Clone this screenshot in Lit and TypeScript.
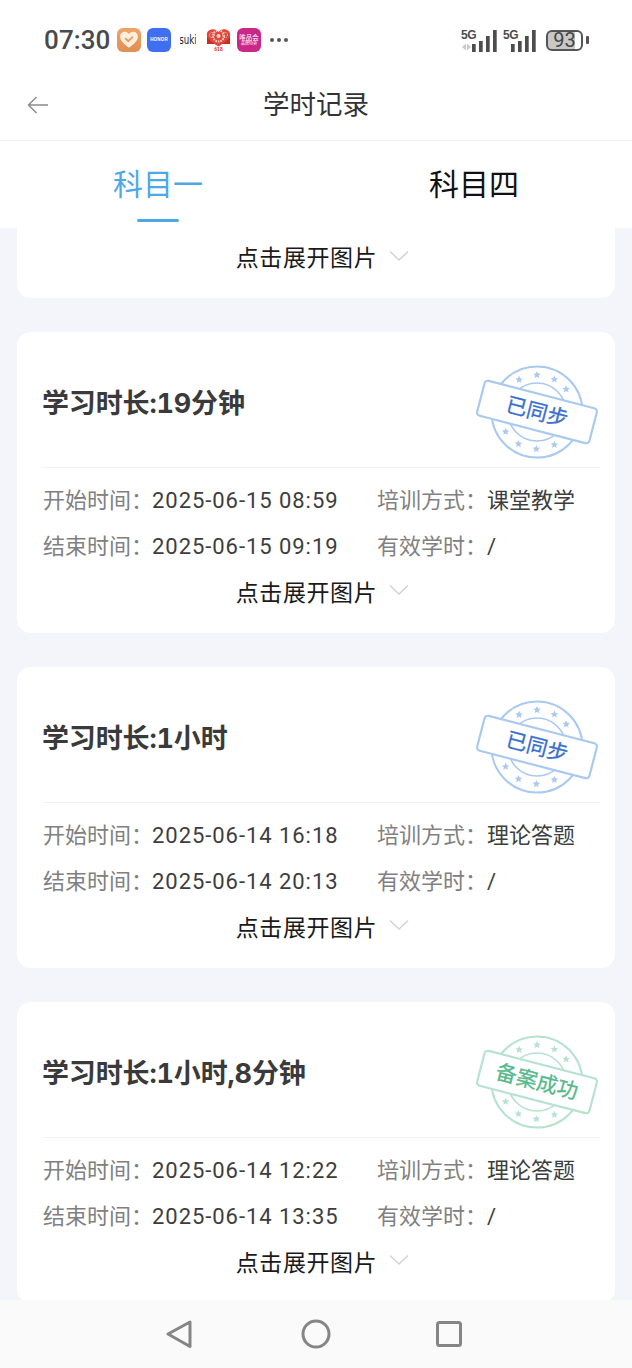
import { LitElement, html, css, svg } from "lit";
import { customElement } from "lit/decorators.js";

function stars(cx: number, cy: number, color: string) {
  const angles = [-119, -90, -62, -38, 148, 120, 91, 62];
  return angles.map((deg) => {
    const a = (deg * Math.PI) / 180;
    const x = cx + 37 * Math.cos(a);
    const y = cy + 37 * Math.sin(a);
    const pts: string[] = [];
    for (let i = 0; i < 10; i++) {
      const r = i % 2 ? 1.8 : 4;
      const t = (i * 36 - 90) * (Math.PI / 180);
      pts.push(`${(x + r * Math.cos(t)).toFixed(1)},${(y + r * Math.sin(t)).toFixed(1)}`);
    }
    return svg`<polygon points=${pts.join(" ")} fill=${color}></polygon>`;
  });
}

function stamp(text: string, line: string, ink: string, size: number, star: string) {
  return html`<svg class="stamp" width="130" height="100" viewBox="0 0 130 100">
    <circle cx="63" cy="50" r="45.500" fill="none" stroke=${line} stroke-width="2"></circle>
    <circle cx="63" cy="50" r="29" fill="none" stroke=${line} stroke-width="1.600"></circle>
    ${stars(63, 50, star)}
    <g transform="rotate(14.5 63 50)">
      <rect x="5" y="32" width="116" height="36" rx="3.500" fill="#fff" stroke=${line} stroke-width="2.200"></rect>
      <text x="63" y="${49.5 + size * 0.36}" text-anchor="middle" fill=${ink} stroke=${ink} stroke-width=".3" font-size=${size}
        font-family='"Noto Sans CJK SC", sans-serif'>${text}</text>
    </g>
  </svg>`;
}

const records = [
  { t: "学习时长:19分钟", s: "2025-06-15 08:59", e: "2025-06-15 09:19", m: "课堂教学", ok: false },
  { t: "学习时长:1小时", s: "2025-06-14 16:18", e: "2025-06-14 20:13", m: "理论答题", ok: false },
  { t: "学习时长:1小时,8分钟", s: "2025-06-14 12:22", e: "2025-06-14 13:35", m: "理论答题", ok: true },
];

const expand = html`<div class="expand"><span>点击展开图片</span>
  <svg width="20" height="12" viewBox="0 0 20 12"><path d="M1 1.500 L10 10 L19 1.500" fill="none" stroke="#d3d3d3" stroke-width="1.500"></path></svg>
</div>`;

const bars = html`<svg width="25" height="23" viewBox="0 0 25 23">
  <rect x="0" y="15" width="3.700" height="8" fill="#4d4d4d"></rect>
  <rect x="7" y="12" width="3.700" height="11" fill="#4d4d4d"></rect>
  <rect x="14" y="7" width="3.700" height="16" fill="#4d4d4d"></rect>
  <rect x="21" y="1" width="3.700" height="22" fill="#4d4d4d"></rect>
</svg>`;

@customElement("app-root")
export class AppRoot extends LitElement {
  static styles = css`
    :host { display: flex; flex-direction: column; width: 632px; height: 1368px; overflow: hidden; background: #f3f5fa; font-family: Inter, "Noto Sans CJK SC", sans-serif; }
    .status { height: 72px; background: #fff; display: flex; align-items: center; padding: 8px 43px 0 44px; box-sizing: border-box; }
    .time { font: 500 26px/1 Roboto, sans-serif; color: #4a4a4a; letter-spacing: .1px; width: 73px; }
    .apps { display: flex; align-items: center; gap: 6px; }
    .app { width: 24px; height: 24px; border-radius: 6px; display: flex; align-items: center; justify-content: center; flex-direction: column; overflow: hidden; }
    .orange { background: linear-gradient(#eea468, #e08f52); }
    .blue { background: #3e6ff0; color: #fff; font: 700 4.5px/1 "Liberation Sans", sans-serif; letter-spacing: .2px; }
    .suki { width: 22px; background: none; color: #222; font: 400 12px/1 "DejaVu Sans", sans-serif; transform: scaleX(.72); }
    .red { width: 25px; margin-left: 1px; background: none; color: #d6332c; font: 700 5px/1 "Liberation Sans", sans-serif; }
    .pink { background: #c9288a; color: #fff; font: 400 6.500px/1.100 "Noto Sans CJK SC", sans-serif; }
    .pink small { font-size: 4px; }
    .dots { margin-left: 9px; display: flex; gap: 3px; }
    .dots i { width: 4px; height: 4px; border-radius: 50%; background: #555; }
    .sys { margin-left: auto; display: flex; align-items: center; }
    .sig { position: relative; width: 36px; height: 23px; margin-right: 6px; }
    .sig b { position: absolute; left: 0; top: 0; font: 700 12px/13px "Liberation Sans", sans-serif; color: #4d4d4d; letter-spacing: -.3px; }
    .sig svg { position: absolute; left: 11px; top: 0; }
    .sig.second svg { left: 8px; }
    .sig .sound { position: absolute; left: 1px; top: 15px; width: 9px; height: 7px; background: #c9c9c9; clip-path: polygon(0 50%, 45% 0, 45% 100%, 55% 100%, 55% 0, 100% 50%, 55% 100%, 45% 100%); }
    .batt { margin-left: 1px; width: 37px; height: 21px; border: 2px solid #555; border-radius: 6px; box-sizing: border-box; display: flex; align-items: center; justify-content: center; font: 400 20px/1 Roboto, sans-serif; color: #444; background: linear-gradient(90deg, #c8c8c8 82%, #fff 82%); }
    .cap { width: 3px; height: 8px; background: #555; margin-left: 3px; border-radius: 1px; }
    .nav { height: 69px; background: #fff; border-bottom: 1px solid #f0f0f0; box-sizing: border-box; display: flex; align-items: center; justify-content: center; position: relative; color: #333; font-size: 26.500px; line-height: 1; padding-bottom: 4px; }
    .back { position: absolute; left: 27px; top: 24px; }
    .tabs { height: 87px; background: #fff; display: flex; flex: none; }
    .tab { flex: 1; display: flex; flex-direction: column; align-items: center; font-size: 30px; line-height: 44px; padding-top: 21px; box-sizing: border-box; color: #111; }
    .tab.on { color: #4fa8e6; }
    .tab i { width: 42px; height: 3px; border-radius: 2px; background: #4fa8e6; margin-top: 13px; }
    .list { flex: 1; min-height: 0; overflow: hidden; display: flex; flex-direction: column; gap: 34px; padding: 0 17px; }
    .card { flex: none; width: 598px; background: #fff; border-radius: 14px; box-sizing: border-box; padding: 0 15px 20px 26px; position: relative; }
    .frag { border-radius: 0 0 14px 14px; padding-top: 5px; padding-bottom: 19px; }
    .head { height: 136px; box-sizing: border-box; border-bottom: 1px solid #f2f2f2; display: flex; align-items: center; font-size: 27px; font-weight: 700; color: #3a3a3a; padding-top: 4px; text-indent: -1px; letter-spacing: -.15px; font-variant-numeric: tabular-nums; }
    .stamp { position: absolute; left: 457px; top: 30px; }
    .rows { padding-top: 7px; display: grid; grid-template-columns: 334px 1fr; grid-auto-rows: 46px; align-items: center; font: 22px Roboto, "Noto Sans CJK SC", sans-serif; letter-spacing: .95px; color: #3d3d3d; white-space: nowrap; }
    .rows span { color: #808080; display: inline-block; width: 109px; letter-spacing: 0; }
    .rows div:nth-child(even) { letter-spacing: 0; }
    .rows div:nth-child(even) span { width: 110px; }
    .expand { height: 46px; display: flex; align-items: center; justify-content: center; gap: 12px; font-size: 23px; letter-spacing: .6px; color: #1a1a1a; box-sizing: border-box; padding: 1px 0 0 2px; }
    .frag .expand { padding-top: 0; }
    .expand svg { margin-top: -1px; }
    .bottom { height: 68px; flex: none; background: #fafafa; position: relative; z-index: 1; display: flex; align-items: center; justify-content: center; padding-right: 4px; }
    .tri { margin-right: 109px; }
    .sq { margin-left: 105px; }
  `;

  render() {
    return html`
      <div class="status">
        <div class="time">07:30</div>
        <div class="apps">
          <div class="app orange"><svg width="20" height="20" viewBox="0 0 18 18"><path d="M9 16 C4 12 1 9.500 1 6 C1 3 3 1.500 5.300 1.500 C7 1.500 8.300 2.500 9 3.500 C9.700 2.500 11 1.500 12.700 1.500 C15 1.500 17 3 17 6 C17 9.500 14 12 9 16Z" fill="#fbeedd"></path><path d="M5.500 7.500 L8.300 10 L12.500 6" fill="none" stroke="#e7a063" stroke-width="1.800"></path></svg></div>
          <div class="app blue">HONOR</div>
          <div class="app suki">suki</div>
          <div class="app red"><svg width="25" height="18" viewBox="0 0 25 18"><path d="M1 5 L1 15 L24 15 L24 5Z" fill="#c92c25"></path><path d="M12.500 17.500 C7 14 .8 10 .8 5.500 C.8 2.500 3.500 .2 7 .2 C9.500 .2 11.500 1.500 12.500 3 C13.500 1.500 15.500 .2 18 .2 C21.500 .2 24.200 2.500 24.200 5.500 C24.200 10 18 14 12.500 17.500Z" fill="#e0483e"></path><circle cx="12.500" cy="7" r="5.500" fill="none" stroke="#f8d5cc" stroke-width="2" stroke-dasharray="1.500 1"></circle><circle cx="12.500" cy="7" r="2" fill="#f8d5cc"></circle><circle cx="6" cy="6" r="2.500" fill="none" stroke="#f8d5cc" stroke-dasharray="1 1"></circle><circle cx="19" cy="6" r="2.500" fill="none" stroke="#f8d5cc" stroke-dasharray="1 1"></circle></svg>618</div>
          <div class="app pink">唯品会<small>品牌特卖</small></div>
        </div>
        <div class="dots"><i></i><i></i><i></i></div>
        <div class="sys">
          <div class="sig"><b>5G</b><i class="sound"></i>${bars}</div>
          <div class="sig second"><b>5G</b>${bars}</div>
          <div class="batt">93</div><div class="cap"></div>
        </div>
      </div>
      <div class="nav">
        <svg class="back" width="21" height="18" viewBox="0 0 21 18"><path d="M21 9 H1.500 M9.500 1 L1.500 9 L9.500 17" fill="none" stroke="#8a8a8a" stroke-width="1.400"></path></svg>
        学时记录
      </div>
      <div class="tabs">
        <div class="tab on">科目一<i></i></div>
        <div class="tab">科目四</div>
      </div>
      <div class="list">
        <div class="card frag">${expand}</div>
        ${records.map((r) => html`<div class="card">
          <div class="head">${r.t}</div>
          ${r.ok
            ? stamp("备案成功", "#b6e3cf", "#55b98a", 21, "#b6e3cf")
            : stamp("已同步", "#a9c9f0", "#3a6fd0", 21, "#a9c9f0")}
          <div class="rows">
            <div><span>开始时间：</span>${r.s}</div><div><span>培训方式：</span>${r.m}</div>
            <div><span>结束时间：</span>${r.e}</div><div><span>有效学时：</span>/</div>
          </div>
          ${expand}
        </div>`)}
      </div>
      <div class="bottom">
        <svg class="tri" width="26" height="28" viewBox="0 0 26 28"><path d="M24 2 L2 14 L24 26.500Z" fill="none" stroke="#858585" stroke-width="3" stroke-linejoin="round"></path></svg>
        <svg width="30" height="30" viewBox="0 0 30 30"><circle cx="15" cy="15" r="13" fill="none" stroke="#858585" stroke-width="3"></circle></svg>
        <svg class="sq" width="26" height="26" viewBox="0 0 26 26"><rect x="1.500" y="1.500" width="23" height="23" rx="2" fill="none" stroke="#858585" stroke-width="3"></rect></svg>
      </div>
    `;
  }
}
